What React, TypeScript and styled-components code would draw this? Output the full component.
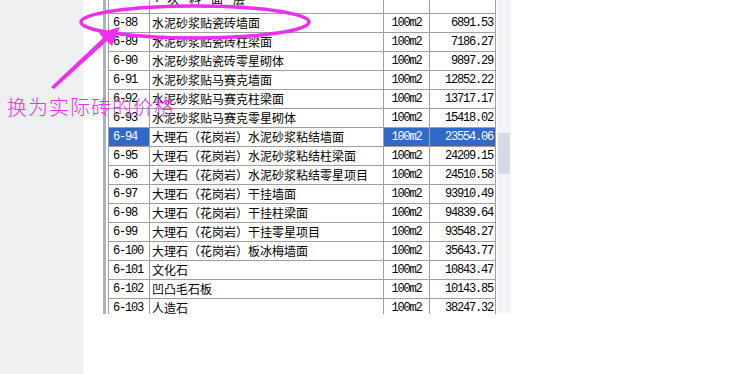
import styled, { createGlobalStyle } from "styled-components";

const GlobalStyle = createGlobalStyle`
  html, body {
    margin: 0;
    padding: 0;
    background: #ffffff;
    overflow: hidden;
  }
`;

type Item = {
  code: string;
  name: string;
  unit: string;
  price: string;
  selected?: boolean;
};

const items: Item[] = [
  { code: "6-88", name: "水泥砂浆贴瓷砖墙面", unit: "100m2", price: "6891.53" },
  { code: "6-89", name: "水泥砂浆贴瓷砖柱梁面", unit: "100m2", price: "7186.27" },
  { code: "6-90", name: "水泥砂浆贴瓷砖零星砌体", unit: "100m2", price: "9897.29" },
  { code: "6-91", name: "水泥砂浆贴马赛克墙面", unit: "100m2", price: "12852.22" },
  { code: "6-92", name: "水泥砂浆贴马赛克柱梁面", unit: "100m2", price: "13717.17" },
  { code: "6-93", name: "水泥砂浆贴马赛克零星砌体", unit: "100m2", price: "15418.02" },
  {
    code: "6-94",
    name: "大理石（花岗岩）水泥砂浆粘结墙面",
    unit: "100m2",
    price: "23554.06",
    selected: true,
  },
  { code: "6-95", name: "大理石（花岗岩）水泥砂浆粘结柱梁面", unit: "100m2", price: "24209.15" },
  { code: "6-96", name: "大理石（花岗岩）水泥砂浆粘结零星项目", unit: "100m2", price: "24510.58" },
  { code: "6-97", name: "大理石（花岗岩）干挂墙面", unit: "100m2", price: "93910.49" },
  { code: "6-98", name: "大理石（花岗岩）干挂柱梁面", unit: "100m2", price: "94839.64" },
  { code: "6-99", name: "大理石（花岗岩）干挂零星项目", unit: "100m2", price: "93548.27" },
  { code: "6-100", name: "大理石（花岗岩）板冰梅墙面", unit: "100m2", price: "35643.77" },
  { code: "6-101", name: "文化石", unit: "100m2", price: "10843.47" },
  { code: "6-102", name: "凹凸毛石板", unit: "100m2", price: "10143.85" },
  { code: "6-103", name: "人造石", unit: "100m2", price: "38247.32" },
];

const Page = styled.div`
  position: relative;
  display: flex;
  width: 739px;
  height: 374px;
  background: #ffffff;
`;

const Sidebar = styled.div`
  width: 83px;
  flex-shrink: 0;
  background: #eff0f2;
`;

const Main = styled.div`
  flex: 1;
  display: flex;
  align-items: flex-start;
  padding-left: 20px;
`;

const Frame = styled.div`
  display: flex;
  height: 314px;
  padding-left: 2px;
  border-left: 3px solid #a7b5c3;
  overflow: hidden;
`;

const Grid = styled.div`
  display: flex;
  flex-direction: column;
  border-left: 1px solid #a0a0a0;
`;

const Row = styled.div<{ $head?: boolean }>`
  display: grid;
  grid-template-columns: 41px 234px 46px 66px;
  height: ${(p) => (p.$head ? "14px" : "19px")};
  flex-shrink: 0;
  border-bottom: 1px solid #a0a0a0;
  box-sizing: border-box;
`;

const Cell = styled.div<{
  $align?: "left" | "center" | "right";
  $selected?: boolean;
  $mono?: boolean;
  $pad?: number;
}>`
  display: flex;
  align-items: center;
  justify-content: ${(p) =>
    p.$align === "right" ? "flex-end" : p.$align === "center" ? "center" : "flex-start"};
  padding: ${(p) =>
    p.$align === "right" ? `0 2px 0 0` : p.$align === "center" ? "0" : `0 0 0 ${p.$pad ?? 2}px`};
  border-right: 1px solid #a0a0a0;
  box-sizing: border-box;
  overflow: hidden;
  white-space: nowrap;
  background: ${(p) => (p.$selected ? "#3169c6" : "transparent")};
  color: ${(p) => (p.$selected ? "#ffffff" : "#000000")};
  font-family: ${(p) =>
    p.$mono
      ? `"Liberation Mono", "DejaVu Sans Mono", monospace`
      : `"Noto Sans CJK SC", "Noto Sans", sans-serif`};
  font-size: 12px;
  letter-spacing: ${(p) => (p.$mono ? "-1.2px" : "0")};
  line-height: 12px;
`;

const HeadCell = styled(Cell)`
  align-items: flex-end;
  padding-bottom: 8px;
`;

const HeadNum = styled.span`
  font-family: "Liberation Mono", monospace;
  letter-spacing: -1.2px;
  margin-right: 9px;
`;

const HeadWords = styled.span`
  letter-spacing: 10px;
`;

const ScrollTrack = styled.div`
  width: 12px;
  height: 314px;
  margin-left: 2px;
  background: #f3f4f8;
  display: flex;
  flex-direction: column;
`;

const ScrollThumb = styled.div`
  margin-top: 133px;
  height: 41px;
  background: #d6dbe3;
`;

const Overlay = styled.svg`
  position: absolute;
  left: 0;
  top: 0;
  pointer-events: none;
`;

const Note = styled.div`
  position: absolute;
  left: 7px;
  top: 96px;
  font-family: "Noto Sans CJK SC", sans-serif;
  font-size: 20px;
  font-weight: 300;
  letter-spacing: 1px;
  line-height: 22px;
  color: #f02ef0;
  white-space: nowrap;
`;

function App() {
  return (
    <>
      <GlobalStyle />
      <Page>
        <Sidebar />
        <Main>
          <Frame>
            <Grid>
              <Row $head>
                <HeadCell $pad={4} />
                <HeadCell>
                  <HeadNum>4</HeadNum>
                  <HeadWords>块料面层</HeadWords>
                </HeadCell>
                <HeadCell />
                <HeadCell />
              </Row>
              {items.map((it) => (
                <Row key={it.code}>
                  <Cell $mono $pad={4} $selected={it.selected}>
                    {it.code}
                  </Cell>
                  <Cell>{it.name}</Cell>
                  <Cell $mono $align="center" $selected={it.selected}>
                    {it.unit}
                  </Cell>
                  <Cell $mono $align="right" $selected={it.selected}>
                    {it.price}
                  </Cell>
                </Row>
              ))}
            </Grid>
            <ScrollTrack>
              <ScrollThumb />
            </ScrollTrack>
          </Frame>
        </Main>
        <Overlay width={739} height={374} viewBox="0 0 739 374">
          <ellipse
            cx={195}
            cy={22}
            rx={114}
            ry={16}
            fill="none"
            stroke="#f02ef0"
            strokeWidth={3.5}
          />
          <polygon
            points="51,87 103,38 99,33 120,27 112,46 107,41 54,89"
            fill="#f02ef0"
          />
        </Overlay>
        <Note>换为实际砖的价格</Note>
      </Page>
    </>
  );
}

export default App;
